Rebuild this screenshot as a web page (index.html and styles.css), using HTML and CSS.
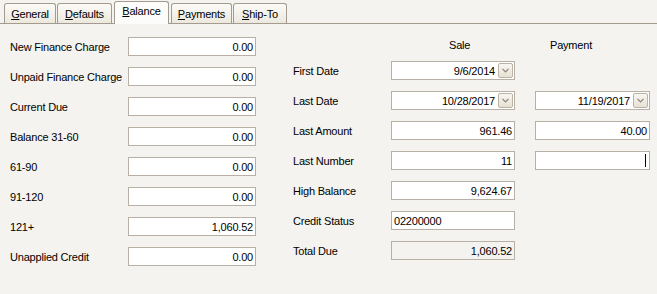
FILE: index.html
```html
<!DOCTYPE html>
<html lang="en">
<head>
    <meta charset="UTF-8">
    <title>Customer Balance</title>
    <link rel="stylesheet" href="styles.css">
</head>
<body>
    <div class="tabs">
        <div class="tab tab-general"><u>G</u>eneral</div>
        <div class="tab tab-defaults"><u>D</u>efaults</div>
        <div class="tab tab-balance active"><u>B</u>alance</div>
        <div class="tab tab-payments"><u>P</u>ayments</div>
        <div class="tab tab-shipto"><u>S</u>hip-To</div>
    </div>
    <div class="panel">
        <div class="aging">
            <span class="label">New Finance Charge</span><div class="field">0.00</div>
            <span class="label">Unpaid Finance Charge</span><div class="field">0.00</div>
            <span class="label">Current Due</span><div class="field">0.00</div>
            <span class="label">Balance 31-60</span><div class="field">0.00</div>
            <span class="label">61-90</span><div class="field">0.00</div>
            <span class="label">91-120</span><div class="field">0.00</div>
            <span class="label">121+</span><div class="field">1,060.52</div>
            <span class="label">Unapplied Credit</span><div class="field">0.00</div>
        </div>
        <div class="history">
            <div class="heads">
                <span></span>
                <span class="head head-sale">Sale</span>
                <span class="head head-payment">Payment</span>
            </div>
            <div class="grid">
                <span class="label">First Date</span>
                <div class="field date">9/6/2014<span class="drop"><svg width="7" height="5" viewBox="0 0 7 5"><polyline points="0.5,0.8 3.5,3.8 6.5,0.8" fill="none" stroke="#8a8174" stroke-width="1.2"/></svg></span></div>
                <span></span>

                <span class="label">Last Date</span>
                <div class="field date">10/28/2017<span class="drop"><svg width="7" height="5" viewBox="0 0 7 5"><polyline points="0.5,0.8 3.5,3.8 6.5,0.8" fill="none" stroke="#8a8174" stroke-width="1.2"/></svg></span></div>
                <div class="field date pay">11/19/2017<span class="drop"><svg width="7" height="5" viewBox="0 0 7 5"><polyline points="0.5,0.8 3.5,3.8 6.5,0.8" fill="none" stroke="#8a8174" stroke-width="1.2"/></svg></span></div>

                <span class="label">Last Amount</span>
                <div class="field">961.46</div>
                <div class="field pay">40.00</div>

                <span class="label">Last Number</span>
                <div class="field">11</div>
                <div class="field pay"><span class="caret"></span></div>

                <span class="label">High Balance</span>
                <div class="field">9,624.67</div>
                <span></span>

                <span class="label">Credit Status</span>
                <div class="field text">02200000</div>
                <span></span>

                <span class="label">Total Due</span>
                <div class="field disabled">1,060.52</div>
                <span></span>
            </div>
        </div>
    </div>
</body>
</html>
```

FILE: styles.css
```css
body {
    margin: 0;
    padding: 0;
    background-color: #f4f3ef;
    color: #000;
    font-family: "Liberation Sans", Arial, sans-serif;
    font-size: 11px;
    letter-spacing: -0.2px;
}
.tabs {
    display: flex;
    align-items: flex-end;
    height: 23px;
    border-bottom: 1px solid #a39b8f;
}
.tab {
    box-sizing: border-box;
    height: 20px;
    padding-top: 4px;
    line-height: 13px;
    text-align: center;
    border: 1px solid #a39b8f;
    border-bottom: none;
    border-radius: 3px 3px 0 0;
    background: linear-gradient(#fcfbf8, #ece8dd);
}
.tab u { text-decoration: underline; text-underline-offset: 1px; }
.tab.active {
    height: 23px;
    margin-bottom: -1px;
    padding-top: 3px;
    background: #fcfcfb;
}
.tab-general { margin-left: 4px; width: 52px; }
.tab-defaults { margin-left: 1px; width: 55px; }
.tab-balance { margin-left: 2px; width: 55px; }
.tab-payments { margin-left: 2px; width: 61px; }
.tab-shipto { margin-left: 1px; width: 54px; }

.panel {
    display: flex;
    align-items: flex-start;
}
.aging {
    display: grid;
    grid-template-columns: 118px 128px;
    grid-auto-rows: 19px;
    row-gap: 11px;
    padding: 13px 0 0 10px;
}
.label {
    display: flex;
    align-items: center;
}
.field {
    box-sizing: border-box;
    display: flex;
    align-items: center;
    justify-content: flex-end;
    height: 19px;
    padding: 0 2px 0 2px;
    background-color: #fff;
    border: 1px solid #b9b0a5;
}
.field.text { justify-content: flex-start; }
.field.disabled { background-color: #f4f3ef; }
.field.date { padding-right: 1px; }
.drop {
    box-sizing: border-box;
    display: flex;
    align-items: center;
    justify-content: center;
    width: 15px;
    height: 15px;
    margin-left: 3px;
    border: 1px solid #bdb3a5;
    border-radius: 2px;
    background: linear-gradient(#f8f6f1, #e6e1d4);
}
.caret {
    width: 1px;
    height: 13px;
    margin-right: 1px;
    background-color: #000;
}

.history {
    margin-left: 37px;
    padding-top: 11px;
}
.heads {
    display: grid;
    grid-template-columns: 98px 124px 135px;
    height: 19px;
    align-items: center;
    margin-bottom: 7px;
}
.head-sale { padding-left: 58px; }
.head-payment { padding-left: 35px; }
.grid {
    display: grid;
    grid-template-columns: 98px 124px 135px;
    grid-auto-rows: 19px;
    row-gap: 11px;
}
.field.pay { margin-left: 20px; width: 115px; }
```
